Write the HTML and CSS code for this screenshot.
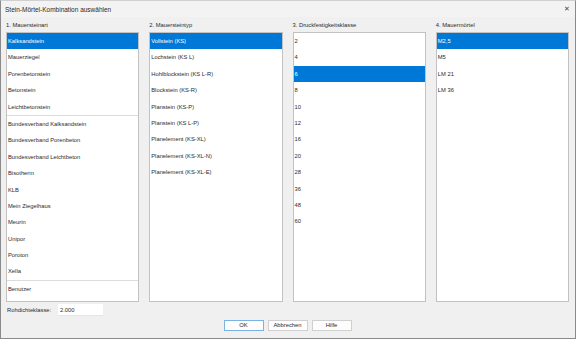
FILE: index.html
```
<!DOCTYPE html>
<html lang="de">
<head>
    <meta charset="UTF-8">
    <title>Stein-Mörtel-Kombination auswählen</title>
    <link rel="stylesheet" href="styles.css">
</head>
<body>

<div class="dialog">
    <div class="titlebar">
        <span class="title">Stein-Mörtel-Kombination auswählen</span>
        <span class="close">✕</span>
    </div>

    <div class="content">
        <div class="columns">
            <div class="column">
                <div class="col-label">1. Mauersteinart</div>
                <div class="list">
                    <div class="row selected">Kalksandstein</div>
                    <div class="row">Mauerziegel</div>
                    <div class="row">Porenbetonstein</div>
                    <div class="row">Betonstein</div>
                    <div class="row">Leichtbetonstein</div>
                    <div class="sep"></div>
                    <div class="row">Bundesverband Kalksandstein</div>
                    <div class="row">Bundesverband Porenbeton</div>
                    <div class="row">Bundesverband Leichtbeton</div>
                    <div class="row">Bisotherm</div>
                    <div class="row">KLB</div>
                    <div class="row">Mein Ziegelhaus</div>
                    <div class="row">Meurin</div>
                    <div class="row">Unipor</div>
                    <div class="row">Poroton</div>
                    <div class="row">Xella</div>
                    <div class="sep"></div>
                    <div class="row">Benutzer</div>
                </div>
            </div>
            <div class="column">
                <div class="col-label">2. Mauersteintyp</div>
                <div class="list">
                    <div class="row selected">Vollstein (KS)</div>
                    <div class="row">Lochstein (KS L)</div>
                    <div class="row">Hohlblockstein (KS L-R)</div>
                    <div class="row">Blockstein (KS-R)</div>
                    <div class="row">Planstein (KS-P)</div>
                    <div class="row">Planstein (KS L-P)</div>
                    <div class="row">Planelement (KS-XL)</div>
                    <div class="row">Planelement (KS-XL-N)</div>
                    <div class="row">Planelement (KS-XL-E)</div>
                </div>
            </div>
            <div class="column">
                <div class="col-label">3. Druckfestigkeitsklasse</div>
                <div class="list">
                    <div class="row">2</div>
                    <div class="row">4</div>
                    <div class="row selected">6</div>
                    <div class="row">8</div>
                    <div class="row">10</div>
                    <div class="row">12</div>
                    <div class="row">16</div>
                    <div class="row">20</div>
                    <div class="row">28</div>
                    <div class="row">36</div>
                    <div class="row">48</div>
                    <div class="row">60</div>
                </div>
            </div>
            <div class="column">
                <div class="col-label">4. Mauermörtel</div>
                <div class="list">
                    <div class="row selected">M2,5</div>
                    <div class="row">M5</div>
                    <div class="row">LM 21</div>
                    <div class="row">LM 36</div>
                </div>
            </div>
        </div>

        <div class="density">
            <label for="density">Rohdichteklasse:</label>
            <input type="text" id="density" value="2.000">
        </div>

        <div class="buttons">
            <button class="default">OK</button>
            <button>Abbrechen</button>
            <button>Hilfe</button>
        </div>
    </div>
</div>

</body>
</html>
```

FILE: styles.css
```
body {
    margin: 0;
    font-family: "Liberation Sans", Arial, sans-serif;
    font-size: 5.8px;
    color: #2b2b2b;
}
.dialog {
    width: 576px;
    height: 339px;
    box-sizing: border-box;
    border: 1px solid #8a8a8a;
    border-top-color: #d0d0d0;
    background-color: #f0f0f0;
    display: flex;
    flex-direction: column;
}
.titlebar {
    height: 16px;
    display: flex;
    align-items: center;
    justify-content: space-between;
    padding: 0 5px 0 4px;
    background-color: #f3f3f3;
}
.title {
    font-size: 6.5px;
    padding-top: 1px;
}
.close {
    font-size: 7px;
    color: #444;
}
.content {
    padding: 0 6px 0 5px;
}
.columns {
    display: grid;
    grid-template-columns: repeat(4, 1fr);
    column-gap: 10px;
}
.col-label {
    line-height: 10px;
    margin: 3px 0 2px 0;
}
.list {
    height: 270px;
    box-sizing: border-box;
    border: 1px solid #c2c2c2;
    background: #ffffff;
    overflow: hidden;
}
.row {
    height: 16.4px;
    line-height: 16.4px;
    padding-left: 1px;
    white-space: nowrap;
}
.row.selected {
    background-color: #0078d7;
    color: #ffffff;
}
.sep {
    height: 1px;
    background-color: #dcdcdc;
}
.density {
    display: flex;
    align-items: center;
    margin-top: 2px;
    height: 12px;
}
.density label {
    width: 51px;
    padding-left: 1px;
}
.density input {
    width: 45px;
    height: 12px;
    box-sizing: border-box;
    border: none;
    border-bottom: 1px solid #e6e6e6;
    padding: 0 2px;
    font-family: inherit;
    font-size: 5.8px;
    color: #2b2b2b;
    background: #ffffff;
}
.buttons {
    display: flex;
    justify-content: center;
    gap: 4px;
    margin-top: 4px;
}
.buttons button {
    width: 40px;
    height: 11px;
    padding: 0;
    border: 1px solid #d0d0d0;
    background: #fdfdfd;
    font-family: inherit;
    font-size: 5.8px;
    color: #2b2b2b;
    line-height: 9px;
}
.buttons button.default {
    border-color: #7ab2e3;
}
```
